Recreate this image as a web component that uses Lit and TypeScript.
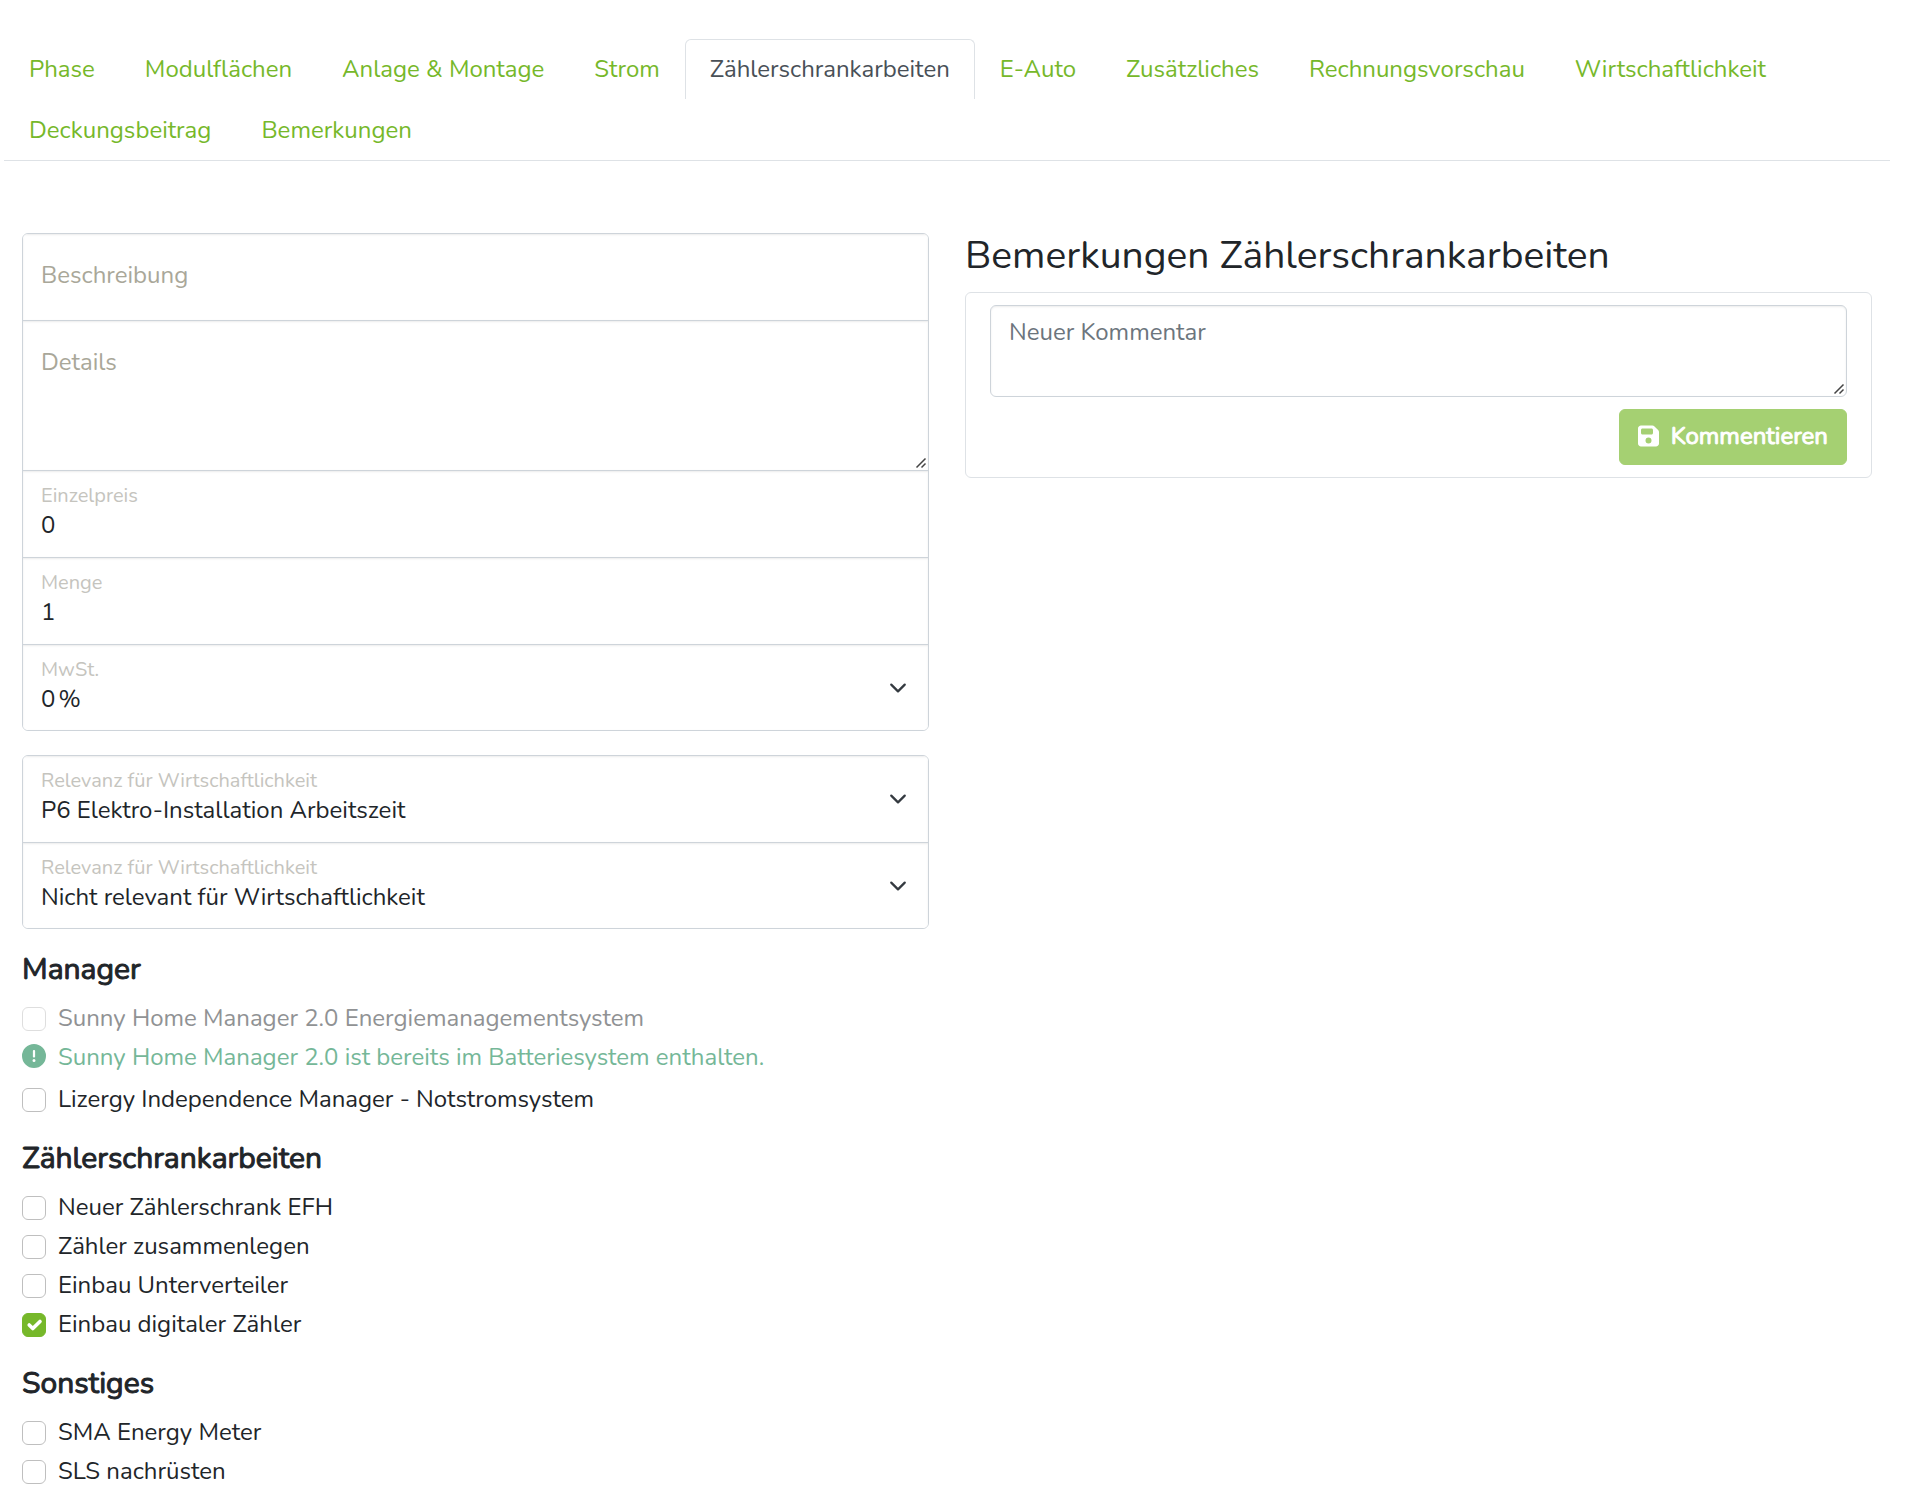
import { LitElement, html, css, svg, nothing } from "lit";
import { customElement, property, state } from "lit/decorators.js";
import { classMap } from "lit/directives/class-map.js";

interface CheckItem {
  id: string;
  label: string;
  checked?: boolean;
  disabled?: boolean;
  notice?: string;
}

interface CheckGroup {
  title: string;
  items: CheckItem[];
}

const TABS = [
  "Phase",
  "Modulflächen",
  "Anlage & Montage",
  "Strom",
  "Zählerschrankarbeiten",
  "E-Auto",
  "Zusätzliches",
  "Rechnungsvorschau",
  "Wirtschaftlichkeit",
  "Deckungsbeitrag",
  "Bemerkungen",
];

const GROUPS: CheckGroup[] = [
  {
    title: "Manager",
    items: [
      {
        id: "shm",
        label: "Sunny Home Manager 2.0 Energiemanagementsystem",
        disabled: true,
        notice: "Sunny Home Manager 2.0 ist bereits im Batteriesystem enthalten.",
      },
      { id: "lim", label: "Lizergy Independence Manager - Notstromsystem" },
    ],
  },
  {
    title: "Zählerschrankarbeiten",
    items: [
      { id: "efh", label: "Neuer Zählerschrank EFH" },
      { id: "merge", label: "Zähler zusammenlegen" },
      { id: "sub", label: "Einbau Unterverteiler" },
      { id: "digital", label: "Einbau digitaler Zähler", checked: true },
    ],
  },
  {
    title: "Sonstiges",
    items: [
      { id: "sma", label: "SMA Energy Meter" },
      { id: "sls", label: "SLS nachrüsten" },
    ],
  },
];

const chevron = svg`<path d="m2 5 6 6 6-6" fill="none" stroke="#343a40" stroke-width="2" stroke-linecap="round" stroke-linejoin="round"/>`;

@customElement("tab-bar")
export class TabBar extends LitElement {
  @property({ attribute: false }) tabs: string[] = [];
  @property({ type: Number }) active = 0;

  static styles = css`
    :host {
      display: block;
    }
    .tabs {
      display: flex;
      flex-wrap: wrap;
      row-gap: 1px;
      margin: 0;
      padding: 0;
      list-style: none;
      border-bottom: 1px solid #dee2e6;
    }
    .link {
      display: block;
      padding: 11px 24px 12px;
      border: 1px solid transparent;
      border-bottom: 0;
      border-radius: 6px 6px 0 0;
      line-height: 36px;
      color: #76b82a;
      text-decoration: none;
    }
    .active {
      border-color: #dee2e6;
      background: #fff;
      color: #495057;
    }
  `;

  render() {
    return html`<nav>
      <ul class="tabs">
        ${this.tabs.map(
          (tab, i) => html`<li>
            <a
              href="#"
              class=${classMap({ link: true, active: i === this.active })}
              aria-current=${i === this.active ? "page" : nothing}
              >${tab}</a
            >
          </li>`,
        )}
      </ul>
    </nav>`;
  }
}

@customElement("check-row")
export class CheckRow extends LitElement {
  @property({ attribute: false }) item!: CheckItem;

  static styles = css`
    :host {
      display: block;
    }
    .row,
    .notice {
      display: flex;
      align-items: flex-start;
      gap: 12px;
      min-height: 28px;
      line-height: 26px;
    }
    .mark {
      display: grid;
      flex: none;
      padding: 2px 0;
    }
    .box,
    .tick {
      grid-area: 1 / 1;
      width: 24px;
      height: 24px;
    }
    .box {
      appearance: none;
      box-sizing: border-box;
      margin: 0;
      border: 1px solid #bfbfbf;
      border-radius: 6px;
      background: #fff;
    }
    .box:checked {
      border-color: #76b82a;
      background: #76b82a;
    }
    .tick {
      visibility: hidden;
      pointer-events: none;
    }
    .box:checked + .tick {
      visibility: visible;
    }
    .box:disabled {
      opacity: 0.5;
    }
    .muted {
      color: #909294;
    }
    .notice {
      margin: 11px 0 3px;
      color: #75b798;
    }
    .notice svg {
      flex: none;
      width: 24px;
      height: 24px;
    }
  `;

  render() {
    const { id, label, checked = false, disabled = false, notice } = this.item;
    return html`
      <div class="row">
        <span class="mark">
          <input class="box" type="checkbox" id=${id} ?checked=${checked} ?disabled=${disabled} />
          <svg class="tick" viewBox="0 0 20 20" aria-hidden="true">
            <path d="m6 10 3 3 6-6" fill="none" stroke="#fff" stroke-width="3" stroke-linecap="round" stroke-linejoin="round" />
          </svg>
        </span>
        <label for=${id} class=${classMap({ muted: disabled })}>${label}</label>
      </div>
      ${notice
        ? html`<div class="notice">
            <svg viewBox="0 0 512 512" fill="currentColor" aria-hidden="true">
              <path
                d="M256 512A256 256 0 1 0 256 0a256 256 0 1 0 0 512zm0-384c13.3 0 24 10.7 24 24V264c0 13.3-10.7 24-24 24s-24-10.7-24-24V152c0-13.3 10.7-24 24-24zM224 352a32 32 0 1 1 64 0 32 32 0 1 1-64 0z"
              />
            </svg>
            <span>${notice}</span>
          </div>`
        : nothing}
    `;
  }
}

@customElement("app-root")
export class AppRoot extends LitElement {
  @state() private vat = "0\u202f%";

  static styles = css`
    :host {
      display: block;
      padding: 39px 32px 0 4px;
      background: #fff;
      color: #212529;
      font-family: Nunito, Lato, sans-serif;
      font-size: 24px;
      line-height: 36px;
    }
    .columns {
      display: grid;
      grid-template-columns: 1fr 1fr;
      gap: 36px;
      margin-top: 72px;
      padding: 0 18px;
    }
    .form {
      display: flex;
      flex-direction: column;
      gap: 24px;
      min-width: 0;
    }
    .fields {
      display: grid;
      overflow: hidden;
      border: 1px solid #ced4da;
      border-radius: 6px;
    }
    .field {
      display: grid;
    }
    .field + .field {
      border-top: 1px solid #ced4da;
    }
    .field > * {
      grid-area: 1 / 1;
    }
    .control {
      box-sizing: border-box;
      display: block;
      width: 100%;
      min-width: 0;
      height: 86px;
      margin: 0;
      padding: 36px 18px 14px;
      border: 0;
      outline: 0;
      appearance: none;
      background: #fff;
      box-shadow: inset 0 1px 2px rgba(0, 0, 0, 0.075);
      color: inherit;
      font: inherit;
    }
    .field:last-child .control {
      height: 85px;
      padding-bottom: 13px;
    }
    .tall {
      height: 149px;
      resize: vertical;
    }
    textarea::-webkit-resizer {
      background: url("data:image/svg+xml,%3Csvg xmlns='http://www.w3.org/2000/svg' viewBox='0 0 15 15'%3E%3Cpath d='M3.500 12.500l9-9M8.500 12.500l4-4' fill='none' stroke='%23444' stroke-width='1.500'/%3E%3C/svg%3E")
        center / 15px 15px no-repeat;
    }
    .label {
      z-index: 1;
      align-self: start;
      justify-self: start;
      padding: 23px 18px;
      color: #a9a799;
      pointer-events: none;
    }
    .floated {
      padding: 7px 18px;
      color: #c5c4be;
      font-size: 20px;
    }
    .chevron {
      z-index: 1;
      align-self: center;
      justify-self: end;
      width: 18px;
      height: 18px;
      margin-right: 21px;
      pointer-events: none;
    }
    .section {
      display: grid;
      gap: 11px;
    }
    .section + .section {
      margin-top: 4px;
    }
    .section-title {
      margin: 0 0 7px;
      font-size: 30px;
      font-weight: 400;
      line-height: 34px;
      -webkit-text-stroke: 1px currentColor;
    }
    .title {
      margin: 0 0 14px;
      font-size: 39px;
      font-weight: 400;
      line-height: 45px;
    }
    .card {
      display: flex;
      flex-direction: column;
      align-items: flex-end;
      gap: 12px;
      padding: 12px 24px;
      border: 1px solid #dee2e6;
      border-radius: 6px;
    }
    .comment {
      box-sizing: border-box;
      display: block;
      width: 100%;
      height: 92px;
      margin: 0;
      padding: 8px 18px;
      border: 1px solid #ced4da;
      border-radius: 6px;
      outline: 0;
      box-shadow: inset 0 1px 2px rgba(0, 0, 0, 0.075);
      color: inherit;
      font: inherit;
      resize: vertical;
    }
    .comment::placeholder {
      color: #6c757d;
      opacity: 1;
    }
    .submit {
      display: flex;
      align-items: center;
      gap: 12px;
      padding: 8px 18px 10px;
      border: 1px solid #a5d072;
      border-radius: 6px;
      background: #a5d072;
      color: #fff;
      font: inherit;
      -webkit-text-stroke: 1px currentColor;
    }
    .submit svg {
      width: 21px;
      height: 24px;
    }
  `;

  private select(id: string, label: string, options: string[]) {
    return html`<div class="field">
      <select class="control" id=${id}>
        ${options.map((o) => html`<option>${o}</option>`)}
      </select>
      <label class="label floated" for=${id}>${label}</label>
      <svg class="chevron" viewBox="0 0 16 16" aria-hidden="true">${chevron}</svg>
    </div>`;
  }

  private input(id: string, label: string, value = "") {
    return html`<div class="field">
      <input class="control" id=${id} type="text" .value=${value} />
      <label class=${classMap({ label: true, floated: value !== "" })} for=${id}>${label}</label>
    </div>`;
  }

  render() {
    return html`
      <tab-bar .tabs=${TABS} active="4"></tab-bar>
      <main class="columns">
        <form class="form">
          <div class="fields">
            ${this.input("description", "Beschreibung")}
            <div class="field">
              <textarea class="control tall" id="details"></textarea>
              <label class="label" for="details">Details</label>
            </div>
            ${this.input("price", "Einzelpreis", "0")} ${this.input("amount", "Menge", "1")}
            ${this.select("vat", "MwSt.", [this.vat])}
          </div>
          <div class="fields">
            ${this.select("relevance-labour", "Relevanz für Wirtschaftlichkeit", ["P6 Elektro-Installation Arbeitszeit"])}
            ${this.select("relevance-material", "Relevanz für Wirtschaftlichkeit", ["Nicht relevant für Wirtschaftlichkeit"])}
          </div>
          ${GROUPS.map(
            (group) => html`<section class="section">
              <h2 class="section-title">${group.title}</h2>
              ${group.items.map((item) => html`<check-row .item=${item}></check-row>`)}
            </section>`,
          )}
        </form>
        <section>
          <h1 class="title">Bemerkungen Zählerschrankarbeiten</h1>
          <div class="card">
            <textarea class="comment" placeholder="Neuer Kommentar" aria-label="Neuer Kommentar"></textarea>
            <button class="submit" type="button">
              <svg viewBox="0 0 448 512" fill="currentColor" aria-hidden="true">
                <path
                  d="M64 32C28.7 32 0 60.7 0 96V416c0 35.3 28.7 64 64 64H384c35.3 0 64-28.7 64-64V173.3c0-17-6.7-33.3-18.7-45.3L352 50.7C340 38.7 323.7 32 306.7 32H64zm0 96c0-17.7 14.3-32 32-32H288c17.7 0 32 14.3 32 32v64c0 17.7-14.3 32-32 32H96c-17.7 0-32-14.3-32-32V128zM224 288a64 64 0 1 1 0 128 64 64 0 1 1 0-128z"
                />
              </svg>
              Kommentieren
            </button>
          </div>
        </section>
      </main>
    `;
  }
}
